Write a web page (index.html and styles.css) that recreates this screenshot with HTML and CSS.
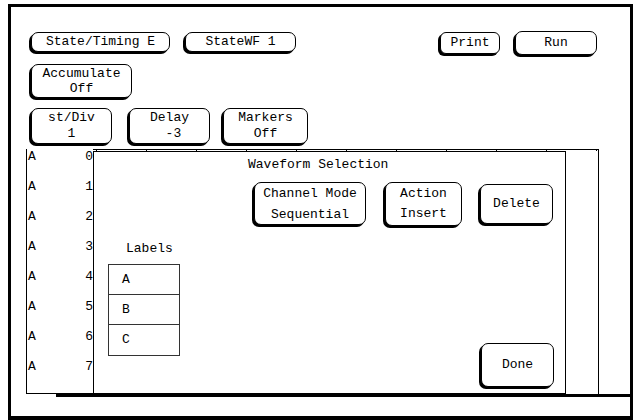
FILE: index.html
```html
<!DOCTYPE html>
<html>
<head>
<meta charset="utf-8">
<link rel="stylesheet" href="styles.css">
</head>
<body>
<div class="screen">
  <div class="row row1">
    <div class="btn b-state">State/Timing E</div>
    <div class="btn b-wf">StateWF 1</div>
    <div class="btn b-print">Print</div>
    <div class="btn b-run">Run</div>
  </div>
  <div class="row row2">
    <div class="btn b-acc"><span>Accumulate</span><span>Off</span></div>
  </div>
  <div class="row row3">
    <div class="btn b-div"><span>st/Div</span><span>1</span></div>
    <div class="btn b-delay"><span>Delay</span><span>&nbsp;-3</span></div>
    <div class="btn b-markers"><span>Markers</span><span>Off</span></div>
  </div>
  <div class="wave">
    <div class="labels-col">
      <div class="sig"><span>A</span><span>0</span></div>
      <div class="sig"><span>A</span><span>1</span></div>
      <div class="sig"><span>A</span><span>2</span></div>
      <div class="sig"><span>A</span><span>3</span></div>
      <div class="sig"><span>A</span><span>4</span></div>
      <div class="sig"><span>A</span><span>5</span></div>
      <div class="sig"><span>A</span><span>6</span></div>
      <div class="sig"><span>A</span><span>7</span></div>
    </div>
    <div class="plot">
      <div class="dialog">
        <div class="d-title">Waveform Selection</div>
        <div class="d-buttons">
          <div class="btn b-chan"><span>Channel Mode</span><span>Sequential</span></div>
          <div class="btn b-action"><span>Action</span><span>Insert</span></div>
          <div class="btn b-delete">Delete</div>
        </div>
        <div class="d-bottom">
          <div class="d-labels">
            <div class="d-labels-title">Labels</div>
            <div class="label-table">
              <div class="label-row">A</div>
              <div class="label-row">B</div>
              <div class="label-row">C</div>
            </div>
          </div>
          <div class="btn b-done">Done</div>
        </div>
      </div>
    </div>
  </div>
  <div class="axis"></div>
</div>
</body>
</html>
```

FILE: styles.css
```css
* { box-sizing: border-box; }

body {
  margin: 0;
  background: #fff;
  color: #000;
  font-family: "Liberation Mono", "DejaVu Sans Mono", monospace;
  font-size: 13px;
  letter-spacing: 0;
}

.screen {
  margin: 4px 0 0 8px;
  width: 625px;
  height: 416px;
  border: 3px solid #000;
  border-bottom-width: 4px;
  padding-top: 24px;
  overflow: hidden;
}

.btn {
  border: 1px solid #000;
  border-radius: 7px;
  box-shadow: -2px 2px 0 #000;
  background: #fff;
  display: flex;
  flex-direction: column;
  align-items: center;
  justify-content: center;
  text-align: center;
  white-space: pre;
  line-height: 16px;
  flex: none;
}

.row {
  display: flex;
  align-items: flex-start;
  padding-left: 20px;
}

.row1 { height: 24px; }
.b-state { width: 139px; height: 20px; margin-top: 1px; }
.b-wf { width: 111px; height: 20px; margin-top: 1px; margin-left: 15px; }
.b-print { width: 60px; height: 22px; margin-top: 1px; margin-left: auto; border-radius: 6px; }
.b-run { width: 82px; height: 24px; margin-left: 15px; margin-right: 33px; }

.row2 { margin-top: 9px; }
.b-acc { width: 101px; height: 34px; line-height: 15px; }

.row3 { margin-top: 10px; }
.b-div { width: 81px; height: 36px; }
.b-delay { width: 81px; height: 36px; margin-left: 17px; }
.b-markers { width: 85px; height: 36px; margin-left: 13px; }

.wave {
  display: flex;
  margin-top: 5px;
  margin-left: 15px;
  height: 245px;
}

.labels-col {
  width: 67px;
  border-left: 1px solid #000;
  border-bottom: 1px solid #000;
}

.sig {
  height: 30px;
  line-height: 16px;
  display: flex;
  justify-content: space-between;
  padding: 0 0 0 1px;
}

.plot {
  position: relative;
  width: 506px;
  border-top: 1px solid #000;
  border-right: 1px solid #000;
  background-image: repeating-linear-gradient(to right, transparent 0 3px, #000 3px 4px, transparent 4px 50px);
  background-size: 100% 1px;
  background-repeat: no-repeat;
}

.dialog {
  position: absolute;
  left: 0;
  top: 1px;
  right: 32px;
  bottom: 0;
  border: 1px solid #000;
  background: #fff;
  display: flex;
  flex-direction: column;
  padding: 5px 11px 6px 0;
}

.d-title {
  padding-left: 154px;
  line-height: 16px;
}

.d-buttons {
  display: flex;
  align-items: flex-start;
  margin-top: 9px;
  padding-left: 160px;
}

.b-chan { width: 112px; height: 43px; line-height: 21px; }
.b-action { width: 77px; height: 44px; line-height: 20px; margin-left: 19px; }
.b-delete { width: 73px; height: 40px; margin-left: 18px; margin-top: 2px; }

.d-bottom {
  flex: 1;
  display: flex;
  justify-content: space-between;
  margin-top: 15px;
}

.d-labels {
  padding-left: 14px;
}

.d-labels-title {
  margin-left: 18px;
  line-height: 16px;
}

.label-table {
  margin-top: 7px;
  width: 72px;
  border: 1px solid #333;
}

.label-row {
  height: 30px;
  line-height: 30px;
  padding-left: 13px;
  border-bottom: 1px solid #333;
}

.label-row:last-child { border-bottom: none; }

.b-done {
  width: 73px;
  height: 44px;
  align-self: flex-end;
}

.axis {
  margin-left: 45px;
  height: 3px;
  background: #000;
}
```
